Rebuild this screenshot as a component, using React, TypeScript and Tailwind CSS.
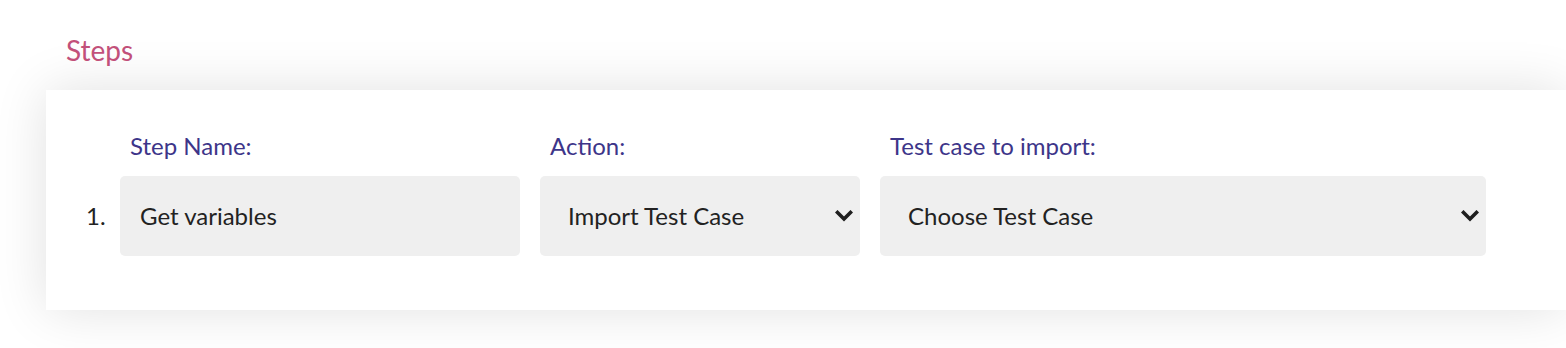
import React from "react";

function Chevron() {
  return (
    <svg width="18" height="12" viewBox="0 0 18 12" className="shrink-0">
      <polyline points="2.5,2.5 9,9 15.5,2.5" fill="none" stroke="#1f1f1f" strokeWidth="3.6" strokeLinecap="square" />
    </svg>
  );
}

export default function App() {
  return (
    <div className="min-h-[348px] w-full overflow-hidden bg-white font-['Lato','Noto_Sans',sans-serif]">
      <div className="pl-[66px] pt-[34px] h-[90px]">
        <h2 className="text-[28px] leading-[1.2] text-[#c2507a] font-normal">Steps</h2>
      </div>
      <div className="pl-[46px]">
        <div className="bg-white shadow-[0_0_50px_rgba(0,0,0,0.12)] pt-[42px] pb-[54px] pl-[40px] flex">
          <div className="w-[34px] pt-[44px] flex flex-col">
            <div className="h-[80px] flex items-center text-[24px] text-[#222]">1.</div>
          </div>
          <div className="flex gap-[20px]">
            <div className="w-[400px] flex flex-col">
              <label className="ml-[10px] text-[24px] leading-[1.2] h-[29px] text-[#3d3589] mb-[15px]">Step Name:</label>
              <div className="h-[80px] rounded-[5px] bg-[#efefef] flex items-center pl-[20px] text-[24px] text-[#222]">Get variables</div>
            </div>
            <div className="w-[320px] flex flex-col">
              <label className="ml-[10px] text-[24px] leading-[1.2] h-[29px] text-[#3d3589] mb-[15px]">Action:</label>
              <div className="h-[80px] rounded-[5px] bg-[#efefef] flex items-center justify-between pl-[28px] pr-[7px] text-[24px] text-[#222]">
                <span>Import Test Case</span>
                <Chevron />
              </div>
            </div>
            <div className="w-[606px] flex flex-col">
              <label className="ml-[10px] text-[24px] leading-[1.2] h-[29px] text-[#3d3589] mb-[15px]">Test case to import:</label>
              <div className="h-[80px] rounded-[5px] bg-[#efefef] flex items-center justify-between pl-[28px] pr-[7px] text-[24px] text-[#222]">
                <span>Choose Test Case</span>
                <Chevron />
              </div>
            </div>
          </div>
        </div>
      </div>
    </div>
  );
}
